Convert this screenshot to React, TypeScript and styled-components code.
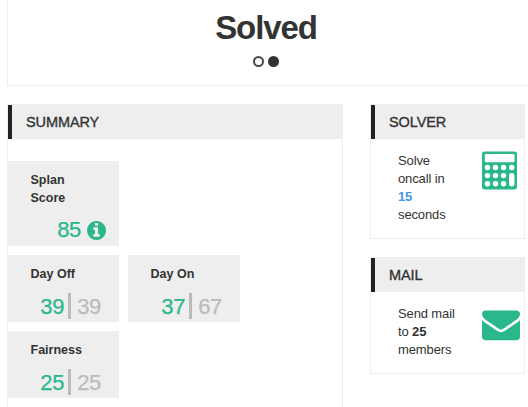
import React from "react";
import styled, { createGlobalStyle } from "styled-components";

const GREEN = "#2bb78c";

const GlobalStyle = createGlobalStyle`
  * { box-sizing: border-box; }
  html, body { margin: 0; height: 100%; overflow: hidden; background: #fff; }
  body {
    font-family: "Liberation Sans", Arial, Helvetica, sans-serif;
    font-size: 13px;
    line-height: 18px;
    color: #333;
  }
  #root { height: 100%; }
`;

const Page = styled.main`
  width: 528px;
  height: 407px;
  padding: 1px 0 0 7px;
  overflow: hidden;
`;

const Banner = styled.header`
  width: 541px;
  height: 85px;
  padding: 7px 23px 0 0;
  border: 1px solid #eee;
  border-top: 0;
  display: flex;
  flex-direction: column;
  align-items: center;
`;

const Title = styled.h1`
  margin: 0;
  font-size: 33px;
  line-height: 40px;
  letter-spacing: -1.1px;
`;

const Pager = styled.div`
  display: flex;
  gap: 4px;
  margin-top: 8px;
`;

const Dot = styled.span<{ $active?: boolean }>`
  width: 11px;
  height: 11px;
  border: 2px solid ${(p) => (p.$active ? "#333" : "#484848")};
  border-radius: 50%;
  background: ${(p) => (p.$active ? "#333" : "transparent")};
`;

const Columns = styled.div`
  display: grid;
  grid-template-columns: 336px 155px;
  column-gap: 27px;
  margin-top: 18px;
`;

const Side = styled.aside`
  display: flex;
  flex-direction: column;
  gap: 18px;
`;

const Panel = styled.section<{ $height: number }>`
  height: ${(p) => p.$height}px;
  border: 1px solid #eee;
`;

const PanelTitle = styled.h2`
  margin: 0;
  height: 34px;
  padding-left: 14px;
  border-left: 4px solid #222;
  background: #eee;
  font-size: 14.5px;
  font-weight: 400;
  line-height: 34px;
  letter-spacing: -0.1px;
  -webkit-text-stroke: 0.35px #333;
`;

const Tiles = styled.div`
  display: grid;
  grid-template-columns: 111px 112px;
  gap: 9px;
  padding-top: 22px;
`;

const Tile = styled.div`
  height: 67px;
  padding: 10px 13px 0 22.5px;
  background: #eee;
`;

const ScoreTile = styled(Tile)`
  grid-column: 1;
  height: 85px;
`;

const TileRow = styled.div`
  grid-column: 1 / -1;
  display: grid;
  grid-template-columns: subgrid;
`;

const Label = styled.div`
  width: 60px;
  font-size: 12.5px;
  font-weight: 700;
`;

const Score = styled.div`
  display: flex;
  align-items: center;
  justify-content: flex-end;
  gap: 6px;
  height: 37px;
  padding-top: 9px;
  color: ${GREEN};
  font-size: 22px;
  letter-spacing: -0.3px;
  -webkit-text-stroke: 0.25px currentColor;
`;

const Ratio = styled.div`
  display: flex;
  justify-content: flex-end;
  gap: 4px;
  height: 26px;
  margin: 10px 5px 0 0;
  color: ${GREEN};
  font-size: 22px;
  line-height: 28px;
  letter-spacing: -0.3px;
  -webkit-text-stroke: 0.25px currentColor;
`;

const Total = styled.span`
  height: 26px;
  padding-left: 6px;
  border-left: 3px solid #bbb;
  color: #bbb;
`;

const Notice = styled.div`
  display: flex;
  justify-content: space-between;
  padding: 12px 4px 0 27px;
`;

const Message = styled.p`
  width: 64px;
  margin: 1px 0 0;
  letter-spacing: -0.12px;
`;

const Seconds = styled.b`
  color: #4596ec;
`;

const IconSlot = styled.span<{ $drop?: number }>`
  width: 38px;
  padding-top: ${(p) => p.$drop ?? 0}px;
  svg { display: block; }
`;

const InfoIcon = () => (
  <svg width="19" height="19" viewBox="128 128 1536 1536" fill={GREEN} stroke="none">
    <path d="M1152 1376v-160q0-14-9-23t-23-9h-96v-512q0-14-9-23t-23-9h-320q-14 0-23 9t-9 23v160q0 14 9 23t23 9h96v320h-96q-14 0-23 9t-9 23v160q0 14 9 23t23 9h448q14 0 23-9t9-23zm-128-896v-160q0-14-9-23t-23-9h-192q-14 0-23 9t-9 23v160q0 14 9 23t23 9h192q14 0 23-9t9-23zm640 416q0 209-103 385.5t-279.5 279.5-385.5 103-385.5-103-279.5-279.5-103-385.5 103-385.5 279.5-279.5 385.5-103 385.5 103 279.5 279.5 103 385.5z" />
  </svg>
);

const KEYS = [
  [5.5, 16.5], [13.5, 16.5], [21.5, 16.5], [29.7, 16.5],
  [5.5, 24.6], [13.5, 24.6], [21.5, 24.6],
  [5.5, 32.7], [13.5, 32.7], [21.5, 32.7],
];

const CalculatorIcon = () => (
  <svg width="35" height="39" viewBox="0 0 35 39">
    <rect y="0.5" width="35" height="38" rx="2.7" fill={GREEN} />
    <g fill="#fff">
      <rect x="2.8" y="3" width="29.7" height="8.3" rx="1.3" />
      {KEYS.map(([x, y]) => (
        <circle key={`${x}-${y}`} cx={x} cy={y} r="2.7" />
      ))}
      <rect x="27" y="21.9" width="5.4" height="13.5" rx="2.7" />
    </g>
  </svg>
);

const EnvelopeIcon = () => (
  <svg width="38" height="38" viewBox="0 0 1792 1792" fill={GREEN}>
    <path d="M1792 710v794q0 66-47 113t-113 47h-1472q-66 0-113-47t-47-113v-794q44 49 101 87 362 246 497 345 57 42 92.5 65.5t94.5 48 110 24.5h2q51 0 110-24.5t94.5-48 92.5-65.5q170-123 498-345 57-39 100-87zm0-294q0 79-49 151t-122 123q-376 261-468 325-10 7-42.5 31t-54 38.5-52 32.5-57.5 27-50 9h-2q-23 0-50-9t-57.5-27-52-32.5-54-38.5-42.5-31q-91-64-262-182.5t-205-142.5q-62-42-117-115.5t-55-136.5q0-78 41.5-130t118.5-52h1472q65 0 112.5 47t47.5 113z" />
  </svg>
);

type RatioTileProps = { label: string; value: number; total: number };

const RatioTile = ({ label, value, total }: RatioTileProps) => (
  <Tile>
    <Label>{label}</Label>
    <Ratio>
      <span>{value}</span>
      <Total>{total}</Total>
    </Ratio>
  </Tile>
);

export default function App() {
  return (
    <>
      <GlobalStyle />
      <Page>
        <Banner>
          <Title>Solved</Title>
          <Pager>
            <Dot />
            <Dot $active />
          </Pager>
        </Banner>
        <Columns>
          <Panel $height={330}>
            <PanelTitle>SUMMARY</PanelTitle>
            <Tiles>
              <ScoreTile>
                <Label>Splan Score</Label>
                <Score>
                  <span>85</span>
                  <InfoIcon />
                </Score>
              </ScoreTile>
              <TileRow>
                <RatioTile label="Day Off" value={39} total={39} />
                <RatioTile label="Day On" value={37} total={67} />
              </TileRow>
              <TileRow>
                <RatioTile label="Fairness" value={25} total={25} />
              </TileRow>
            </Tiles>
          </Panel>
          <Side>
            <Panel $height={135}>
              <PanelTitle>SOLVER</PanelTitle>
              <Notice>
                <Message>
                  Solve<br />oncall in<br /><Seconds>15</Seconds><br />seconds
                </Message>
                <IconSlot><CalculatorIcon /></IconSlot>
              </Notice>
            </Panel>
            <Panel $height={117}>
              <PanelTitle>MAIL</PanelTitle>
              <Notice>
                <Message>
                  Send mail<br />to <b>25</b><br />members
                </Message>
                <IconSlot $drop={1}><EnvelopeIcon /></IconSlot>
              </Notice>
            </Panel>
          </Side>
        </Columns>
      </Page>
    </>
  );
}
